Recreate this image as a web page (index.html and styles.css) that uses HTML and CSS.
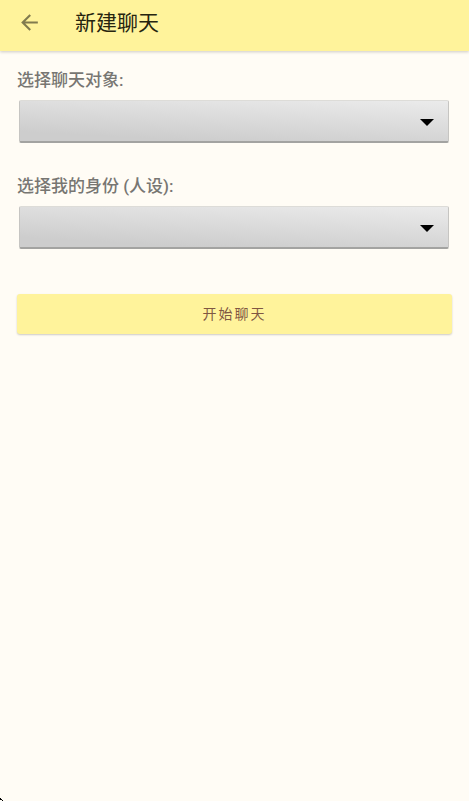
FILE: index.html
```html
<!DOCTYPE html>
<html lang="zh-CN">
<head>
    <meta charset="UTF-8">
    <meta name="viewport" content="width=device-width, initial-scale=1.0">
    <title>新建聊天</title>
    <link rel="stylesheet" href="styles.css">
</head>
<body>
    <header class="toolbar">
        <a class="back" href="#" aria-label="返回">
            <svg viewBox="0 0 24 24" width="25" height="25" fill="currentColor" aria-hidden="true">
                <path d="M20 11H7.83l5.59-5.59L12 4l-8 8 8 8 1.41-1.41L7.83 13H20v-2z"/>
            </svg>
        </a>
        <h1>新建聊天</h1>
    </header>

    <main>
        <form class="chat-form">
            <div class="field">
                <label for="character">选择聊天对象:</label>
                <div class="spinner">
                    <select id="character" name="character">
                        <option value=""></option>
                    </select>
                </div>
            </div>

            <div class="field">
                <label for="persona">选择我的身份 (人设):</label>
                <div class="spinner">
                    <select id="persona" name="persona">
                        <option value=""></option>
                    </select>
                </div>
            </div>

            <button class="start" type="submit">开始聊天</button>
        </form>
    </main>

    <svg class="corner" viewBox="0 0 3 3" width="3" height="3" aria-hidden="true">
        <path d="M0 0h1v1h1v1h1v1H2V2H0z"/>
    </svg>
</body>
</html>
```

FILE: styles.css
```css
/* Reset and basic layout */
* {
    margin: 0;
    padding: 0;
    box-sizing: border-box;
}

body {
    font-family: Roboto, "Noto Sans CJK SC", sans-serif;
    min-height: 100vh;
    background-color: #fffcf5;
}

/* Top bar */
.toolbar {
    display: flex;
    align-items: center;
    gap: 33px;
    height: 51px;
    padding: 0 17px 6px;
    background-color: #fff39b;
    box-shadow: 0 1px 3px rgba(0, 0, 0, 0.2);
}

.back {
    display: flex;
    color: #817b4e;
}

h1 {
    font-size: 21px;
    font-weight: 400;
    line-height: 30px;
    color: #26240f;
}

/* Form */
.chat-form {
    display: flex;
    flex-direction: column;
    padding: 17px;
}

.field {
    margin-bottom: 29px;
}

label {
    display: block;
    margin-bottom: 7px;
    font-size: 17px;
    font-weight: 500;
    line-height: 25px;
    color: #777672;
}

.spinner {
    position: relative;
    margin: 0 3px 2px 2px;
}

.spinner::after {
    content: "";
    position: absolute;
    top: 19px;
    right: 15px;
    border: 7px solid transparent;
    border-top-color: #000;
    border-bottom: none;
    pointer-events: none;
}

select {
    display: block;
    width: 100%;
    height: 43px;
    padding: 0 40px 0 12px;
    appearance: none;
    border: 1px solid #c6c5c2;
    border-top-color: #dddcd8;
    border-bottom: 2px solid #a3a3a1;
    border-radius: 2px;
    background: linear-gradient(183deg, #ebebeb, #cdcdcd 85%);
    font: inherit;
    font-size: 17px;
}

.start {
    height: 40px;
    margin-top: 14px;
    padding-bottom: 2px;
    border: none;
    border-radius: 3px;
    background-color: #fff39b;
    box-shadow: 0 1px 2px rgba(0, 0, 0, 0.2);
    color: #805743;
    font-family: inherit;
    font-size: 14px;
    letter-spacing: 2px;
    cursor: pointer;
}

/* Rounded screen corner */
.corner {
    position: fixed;
    left: 0;
    bottom: 0;
}
```
